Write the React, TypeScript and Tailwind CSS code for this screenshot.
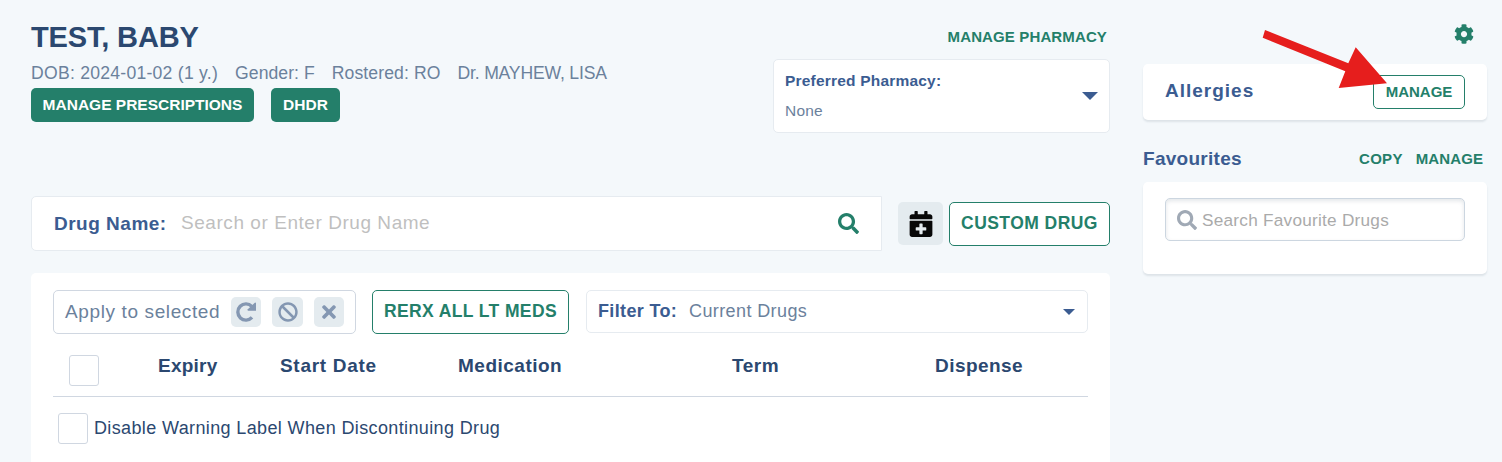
import type { ReactNode } from "react";
import { FaBan, FaCalendarPlus, FaCog, FaSearch, FaTimes } from "react-icons/fa";

function IconTile({ children, className }: { children: ReactNode; className: string }) {
  return (
    <button className={`flex h-[30px] items-center justify-center rounded-[5px] bg-[#e4ebef] text-[#8497b2] ${className}`}>
      {children}
    </button>
  );
}

function Caret({ className }: { className: string }) {
  return (
    <svg viewBox="0 0 16 8" preserveAspectRatio="none" className={className}>
      <path d="M0 0H16L8 8Z" fill="#3b5c91" />
    </svg>
  );
}

function RepeatIcon() {
  return (
    <svg viewBox="0 0 20 20" className="size-[20px]">
      <path d="M15.8 4.4A8.1 8.1 0 1 0 16 15.4" fill="none" stroke="currentColor" strokeWidth="3.4" />
      <path d="M20 1.2V8.8H12.2Q11 8.3 11.8 7.3L18.8 .7Q19.8 .2 20 1.2Z" fill="currentColor" />
    </svg>
  );
}

function Header() {
  return (
    <header className="flex h-[196px] justify-between">
      <div className="flex flex-col pt-[19px]">
        <h1 className="h-[36px] text-[29px] leading-[36px] font-bold tracking-[-0.15px] whitespace-nowrap text-[#2b4870]">TEST, BABY</h1>
        <div className="flex h-[33px] gap-[17px] text-[17.6px] leading-[36px] whitespace-nowrap text-[#6b819c]">
          <span className="tracking-[0.25px]">DOB: 2024-01-02 (1 y.)</span>
          <span className="tracking-[0.05px]">Gender: F</span>
          <span className="tracking-[0.1px]">Rostered: RO</span>
          <span className="tracking-[-0.18px]">Dr. MAYHEW, LISA</span>
        </div>
        <div className="flex gap-[17px] text-[15.5px] leading-[34px] font-bold text-white">
          <button className="h-[34px] w-[223px] rounded-[5px] bg-[#247f6a] whitespace-nowrap">MANAGE PRESCRIPTIONS</button>
          <button className="h-[34px] w-[69px] rounded-[5px] bg-[#247f6a]">DHDR</button>
        </div>
      </div>
      <div className="flex w-[337px] flex-col">
        <div className="h-[59px] pt-[27px] pr-[3px] text-right text-[15px] leading-[20px] font-bold tracking-[0.13px] text-[#247f6a]">
          MANAGE PHARMACY
        </div>
        <div className="flex h-[74px] items-center justify-between rounded-[5px] border border-[#e6ebf0] bg-white pr-[11px] pl-[11px]">
          <div className="flex flex-col leading-[30px]">
            <span className="text-[15.5px] tracking-[0.2px] font-bold text-[#3b5c91]">Preferred Pharmacy:</span>
            <span className="text-[15.5px] tracking-[0.2px] text-[#6b819c]">None</span>
          </div>
          <Caret className="h-[8px] w-[16px]" />
        </div>
      </div>
    </header>
  );
}

function DrugSearch() {
  return (
    <div className="flex h-[77px] items-start">
      <div className="flex h-[55px] w-[851px] items-center rounded-l-[5px] border border-[#e6ebf0] bg-white pr-[22px] pl-[22px] whitespace-nowrap">
        <span className="w-[127px] text-[19px] leading-[24px] font-bold tracking-[0.5px] text-[#3b5c91]">Drug Name:</span>
        <span className="grow pb-[2px] text-[19px] leading-[26px] tracking-[0.55px] text-[#bfbfbf]">Search or Enter Drug Name</span>
        <FaSearch className="size-[21px] text-[#247f6a]" />
      </div>
      <button className="mt-[6px] ml-[16px] flex h-[43px] w-[45px] items-center justify-center rounded-[5px] bg-[#e4ebef] text-[#080808]">
        <FaCalendarPlus className="size-[26px]" />
      </button>
      <button className="mt-[6px] ml-[6px] h-[44px] w-[161px] rounded-[5px] border border-[#247f6a] bg-white pb-[2px] text-[17.5px] leading-[40px] font-bold tracking-[0.45px] whitespace-nowrap text-[#247f6a]">
        CUSTOM DRUG
      </button>
    </div>
  );
}

function Medications() {
  return (
    <section className="flex h-[189px] flex-col rounded-t-[5px] bg-white px-[22px] pt-[17px]">
      <div className="flex h-[44px] items-start whitespace-nowrap">
        <div className="flex h-[44px] w-[303px] items-center rounded-[5px] border border-[#d0d7e1] pl-[11px]">
          <span className="w-[166px] text-[19px] leading-[42px] tracking-[0.62px] text-[#6b819c]">Apply to selected</span>
          <IconTile className="w-[30px]"><RepeatIcon /></IconTile>
          <IconTile className="ml-[11px] w-[31px]"><FaBan className="size-[20px]" /></IconTile>
          <IconTile className="ml-[11px] w-[30px]"><FaTimes className="size-[20px]" /></IconTile>
        </div>
        <button className="ml-[16px] h-[44px] w-[197px] rounded-[5px] border border-[#247f6a] pb-[2px] text-[17.5px] leading-[40px] font-bold tracking-[0.38px] text-[#247f6a]">
          RERX ALL LT MEDS
        </button>
        <div className="ml-[17px] flex h-[43px] w-[502px] items-center rounded-[5px] border border-[#e6ebf0] pr-[12px] pl-[11px] text-[18px]">
          <span className="w-[91px] font-bold tracking-[0.35px] text-[#3b5c91]">Filter To:</span>
          <span className="grow tracking-[0.4px] text-[#6b819c]">Current Drugs</span>
          <Caret className="h-[6px] w-[12px]" />
        </div>
      </div>
      <div className="flex h-[63px] border-b border-[#d0d7e1] text-[19px] leading-[24px] font-bold whitespace-nowrap text-[#2b4870]">
        <div className="mt-[21px] mr-[59px] ml-[16px] h-[31px] w-[30px] rounded-[3px] border border-[#d0d7e1]" />
        <span className="mt-[20px] w-[122px] tracking-[0.25px]">Expiry</span>
        <span className="mt-[20px] w-[178px] tracking-[0.7px]">Start Date</span>
        <span className="mt-[20px] w-[274px] tracking-[0.5px]">Medication</span>
        <span className="mt-[20px] w-[203px] tracking-[0.5px]">Term</span>
        <span className="mt-[20px] tracking-[0.45px]">Dispense</span>
      </div>
      <label className="mt-[16px] flex pl-[5px] text-[18px] leading-[31px] tracking-[0.37px] whitespace-nowrap text-[#2b4870]">
        <span className="mr-[6px] h-[31px] w-[30px] rounded-[3px] border border-[#d0d7e1]" />
        Disable Warning Label When Discontinuing Drug
      </label>
    </section>
  );
}

function Sidebar() {
  return (
    <aside className="flex w-[344px] flex-col">
      <div className="flex h-[64px] justify-end pt-[24px] pr-[13px]">
        <FaCog className="size-[20px] text-[#247f6a]" />
      </div>
      <div className="flex h-[56px] items-center justify-between rounded-[5px] bg-white pr-[22px] pl-[22px] shadow-[0_2px_2px_rgba(60,80,100,0.12)]">
        <span className="-mt-[2px] text-[19px] font-bold tracking-[1px] text-[#3b5c91]">Allergies</span>
        <button className="h-[34px] w-[92px] rounded-[5px] border border-[#247f6a] text-[15px] leading-[32px] font-bold text-[#247f6a]">MANAGE</button>
      </div>
      <div className="flex h-[62px] items-center pt-[16px] pr-[4px] leading-[24px] font-bold text-[#247f6a]">
        <span className="grow text-[19px] tracking-[0.28px] text-[#3b5c91]">Favourites</span>
        <span className="mr-[13px] text-[15px] tracking-[0.3px]">COPY</span>
        <span className="text-[15px] tracking-[0.1px]">MANAGE</span>
      </div>
      <div className="h-[92px] rounded-[5px] bg-white px-[22px] pt-[16px] shadow-[0_2px_2px_rgba(60,80,100,0.12)]">
        <div className="flex h-[43px] items-center rounded-[5px] border border-[#ccd6e0] pl-[11px] text-[17.2px] leading-[24px] tracking-[0.25px] whitespace-nowrap text-[#aaaaaa] shadow-[inset_0_2px_4px_rgba(60,80,100,0.14)]">
          <FaSearch className="mr-[5px] size-[20px] text-[#a0a9b5]" />
          <span className="pt-[1px]">Search Favourite Drugs</span>
        </div>
      </div>
    </aside>
  );
}

export default function App() {
  return (
    <div className="relative flex h-[462px] w-[1502px] gap-[33px] overflow-hidden bg-[#f4f8fb] pl-[31px] font-['Liberation_Sans',Arial,sans-serif]">
      <main className="flex w-[1079px] shrink-0 flex-col">
        <Header />
        <DrugSearch />
        <Medications />
      </main>
      <Sidebar />
      <svg viewBox="0 0 126 60" className="pointer-events-none absolute top-[29px] left-[1262px] h-[60px] w-[126px]">
        <path d="M3 1L86.3 34.3L93.7 18.3L125 54.3L76.7 59L83.3 42.3L.7 8.7Z" fill="#e61e1d" />
      </svg>
    </div>
  );
}
